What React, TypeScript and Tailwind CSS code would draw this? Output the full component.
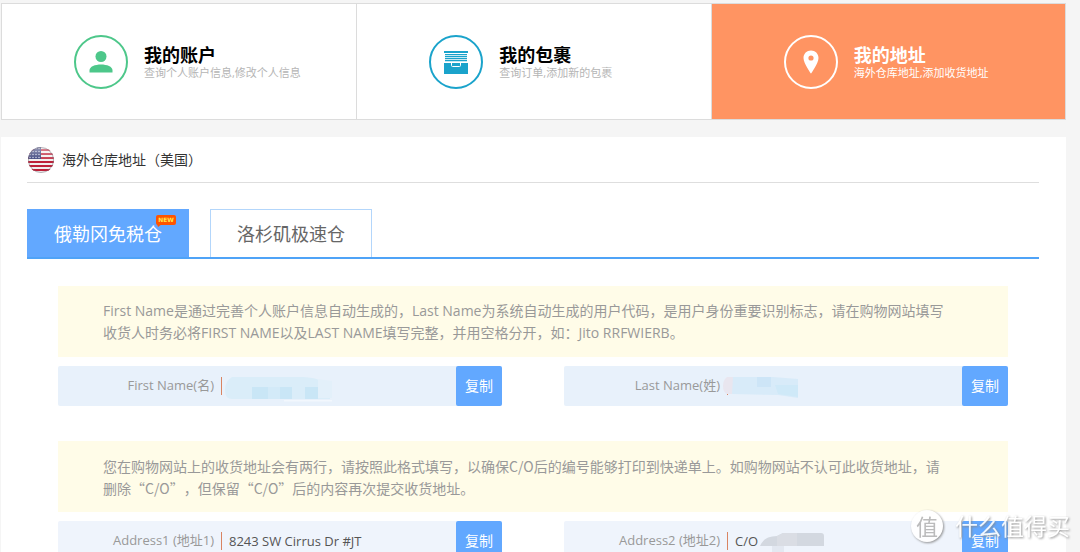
import { ReactNode, useState } from "react";

function AccountIcon() {
  return (
    <svg viewBox="0 0 24 24" className="size-6" fill="currentColor" aria-hidden="true">
      <circle cx="12" cy="6.5" r="5.5" />
      <path d="M0.5 22.5v-2c0-4 5.500-6 11.500-6s11.500 2 11.500 6v2z" />
    </svg>
  );
}

function ParcelIcon() {
  return (
    <svg viewBox="0 0 24 24" className="size-6" fill="currentColor" aria-hidden="true">
      <path d="M0 1h24v2H0zM1 4h22v1.200H1zM1 6h22v1.200H1zM1 8h22v1.200H1zM1 10h22v1.200H1z" />
      <path d="M0 13h24v11H0z" />
      <path d="M7.500 13v2.500q0 1 1 1h7q1 0 1-1V13" fill="none" stroke="white" strokeWidth="1" />
    </svg>
  );
}

function PinIcon() {
  return (
    <svg viewBox="0 0 24 24" className="size-6" fill="currentColor" aria-hidden="true">
      <path
        fillRule="evenodd"
        d="M12 0.500c-4.200 0-7.500 3.200-7.500 7.400 0 5.200 7.500 15.600 7.500 15.600s7.500-10.400 7.500-15.600c0-4.200-3.300-7.400-7.500-7.400zm0 4.900a2.600 2.600 0 1 1 0 5.200 2.600 2.600 0 0 1 0-5.200z"
      />
    </svg>
  );
}

function FlagIcon() {
  return (
    <svg viewBox="0 0 26 26" className="size-[26px]" aria-hidden="true">
      <defs>
        <clipPath id="flag-disc">
          <circle cx="13" cy="13" r="13" />
        </clipPath>
        <linearGradient id="flag-gloss" x1="0" y1="0" x2="0" y2="1">
          <stop offset="0" stopColor="white" stopOpacity="0.500" />
          <stop offset="0.500" stopColor="white" stopOpacity="0.100" />
          <stop offset="0.510" stopColor="white" stopOpacity="0" />
        </linearGradient>
      </defs>
      <g clipPath="url(#flag-disc)">
        <rect width="26" height="26" fill="#f1eeee" />
        {[3, 7, 11, 15, 19, 23].map((y) => (
          <rect key={y} y={y - 1} width="26" height="2" fill="#bd2038" />
        ))}
        <rect width="13" height="12" fill="#2c3472" />
        {[2, 5, 8, 11].map((y) =>
          [2, 5, 8, 11].map((x) => <circle key={`${x}-${y}`} cx={x} cy={y - 0.5} r="0.700" fill="#d9dcee" />),
        )}
        <rect width="26" height="26" fill="url(#flag-gloss)" />
      </g>
      <circle cx="13" cy="13" r="12.500" fill="none" stroke="#77707c" strokeOpacity="0.500" />
    </svg>
  );
}

function NewBadge() {
  return (
    <span className="absolute top-[5px] right-3 flex h-[10px] w-5 items-center justify-center rounded-xs bg-[#ff5400] font-['DejaVu_Sans'] text-[6px] leading-none font-bold text-[#ffe94a]">
      NEW
      <svg viewBox="0 0 5 3" className="absolute top-[9px] left-px h-[3px] w-[5px]" aria-hidden="true">
        <path d="M0 0h5L1 3z" fill="#ff5400" />
      </svg>
    </span>
  );
}

const cards = [
  { title: "我的账户", text: "查询个人账户信息,修改个人信息", icon: <AccountIcon />, active: false, ring: "border-[#4dc78a] text-[#4dc78a]" },
  { title: "我的包裹", text: "查询订单,添加新的包裹", icon: <ParcelIcon />, active: false, ring: "border-[#1aa3cb] text-[#1aa3cb]" },
  { title: "我的地址", text: "海外仓库地址,添加收货地址", icon: <PinIcon />, active: true, ring: "border-white text-white" },
];

function Note({ font = "", children }: { font?: string; children: ReactNode }) {
  return (
    <p className={`bg-[#fffce8] pt-[14px] pr-[60px] pb-[13px] pl-[45px] text-sm leading-[22px] text-[#999] ${font}`}>
      {children}
    </p>
  );
}

type FieldProps = { id: string; label: string; value?: string; tone: string; mask?: ReactNode };

function Field({ id, label, value = "", tone, mask }: FieldProps) {
  return (
    <div className={`relative flex h-10 items-center rounded-xs ${tone}`}>
      <label htmlFor={id} className="w-[156px] shrink-0 text-right text-[13px] text-[#999]">
        {label}
      </label>
      <span className="ml-[7px] h-[18px] w-px bg-[#d98462]" />
      <input
        id={id}
        readOnly
        value={value}
        className="h-full min-w-0 flex-1 bg-transparent pl-[7px] text-[13px] text-[#555] outline-none"
      />
      {mask}
      <button type="button" className="h-full w-[46px] shrink-0 rounded-xs bg-[#62a8ff] text-sm text-white">
        复制
      </button>
    </div>
  );
}

function FirstNameMask() {
  return (
    <svg viewBox="0 0 112 26" className="absolute top-[10px] left-[166px] h-[26px] w-28" aria-hidden="true">
      <path d="M8 1H80q14 1 16 4l10 2v16H8q-7 0-7-9t7-13z" fill="#daedf9" />
      <path d="M94 3l14 2v17H94z" fill="#e3f0fa" />
      <path d="M28 11h40v12H28zM81 11h13v12H81z" fill="#c9e6f6" />
      <path d="M44 11h12v12H44z" fill="#d3eaf8" />
      <path d="M60 24h48v1.500H60z" fill="#f2f7fd" />
    </svg>
  );
}

function LastNameMask() {
  return (
    <svg viewBox="0 0 76 24" className="absolute top-[9px] left-[159px] h-6 w-[76px]" aria-hidden="true">
      <path d="M4 2h8v17H4Q0 17 0 11t4-9z" fill="#e9e6ef" />
      <path d="M10 2H50l25 2v19l-20-3-46-1z" fill="#d8ebf9" />
      <path d="M34 2h14v10H34z" fill="#cde5f7" />
      <path d="M52 10h23v12l-20-3z" fill="#cfe9f8" />
    </svg>
  );
}

function CareOfMask() {
  return (
    <svg viewBox="0 0 66 24" className="absolute top-[11px] left-[195px] h-6 w-[66px]" aria-hidden="true">
      <path d="M1 14Q5 4 18 4l6-3h38q3 0 3 3v10z" fill="#d3d8e0" />
      <path d="M18 4l6-3h14v13H18z" fill="#dadde4" />
      <path d="M13 14h12v9H13z" fill="#e3e8f1" />
    </svg>
  );
}

function Watermark() {
  return (
    <div className="pointer-events-none fixed right-[10px] bottom-[10px] flex items-center gap-3 text-white opacity-90 drop-shadow-[1px_1px_1px_#888]">
      <span className="flex size-8 items-center justify-center rounded-full bg-white text-[22px] leading-none text-[#b5b5b5]">
        值
      </span>
      <span className="text-[23px] leading-8">什么值得买</span>
    </div>
  );
}

export default function App() {
  const [tab, setTab] = useState(0);
  const tabs = ["俄勒冈免税仓", "洛杉矶极速仓"];

  return (
    <div className="min-h-screen bg-[#f5f5f5] pt-[3px] pr-[14px] pl-px font-['Open_Sans','Noto_Sans_CJK_SC',sans-serif] [text-spacing-trim:space-all]">
      <nav className="grid grid-cols-3 border border-[#dcdcdc] bg-white">
        {cards.map((card) => (
          <a
            key={card.title}
            href="#"
            className={`flex h-[115px] items-center gap-4 border-l border-[#dcdcdc] pl-[72px] first:border-l-0 ${
              card.active ? "bg-[#ff9462] text-white" : "text-black"
            }`}
          >
            <span className={`flex size-[54px] shrink-0 items-center justify-center rounded-full border-2 ${card.ring}`}>
              {card.icon}
            </span>
            <span className="flex flex-col pt-[2px]">
              <span className="text-lg leading-5 font-bold">{card.title}</span>
              <span className={`text-[11px] leading-4 ${card.active ? "text-white" : "text-[#b5b5b5]"}`}>{card.text}</span>
            </span>
          </a>
        ))}
      </nav>

      <main className="mt-[17px] bg-white pr-[27px] pb-9 pl-[26px]">
        <h1 className="flex h-[46px] items-center gap-2 border-b border-[#dedede] pl-px text-sm text-[#333]">
          <FlagIcon />
          海外仓库地址（美国）
        </h1>

        <div role="tablist" className="mt-[26px] flex gap-[21px] border-b-2 border-[#4fa3f7]">
          {tabs.map((name, i) => (
            <button
              key={name}
              type="button"
              role="tab"
              aria-selected={tab === i}
              onClick={() => setTab(i)}
              className={`relative h-12 w-[162px] border border-b-0 text-lg ${
                tab === i ? "border-[#62a8ff] bg-[#62a8ff] text-white" : "border-[#b3d6fb] bg-white text-[#666]"
              }`}
            >
              {name}
              {i === 0 && <NewBadge />}
            </button>
          ))}
        </div>

        <div className="mx-[31px] mt-[27px] flex flex-col gap-[35px]">
          <section className="flex flex-col gap-[9px]">
            <Note>
              First Name是通过完善个人账户信息自动生成的，Last Name为系统自动生成的用户代码，是用户身份重要识别标志，请在购物网站填写收货人时务必将FIRST
              NAME以及LAST NAME填写完整，并用空格分开，如：Jito RRFWIERB。
            </Note>
            <div className="grid grid-cols-2 gap-[62px]">
              <Field id="first-name" label="First Name(名)" tone="bg-[#e8f1fb]" mask={<FirstNameMask />} />
              <Field id="last-name" label="Last Name(姓)" tone="bg-[#e8f1fb]" mask={<LastNameMask />} />
            </div>
          </section>

          <section className="flex flex-col gap-[9px]">
            <Note font="font-['Noto_Sans_CJK_SC',sans-serif]">
              您在购物网站上的收货地址会有两行，请按照此格式填写，以确保C/O后的编号能够打印到快递单上。如购物网站不认可此收货地址，请删除“C/O”，但保留“C/O”后的内容再次提交收货地址。
            </Note>
            <div className="grid grid-cols-2 gap-[62px]">
              <Field id="address-1" label="Address1 (地址1)" value="8243 SW Cirrus Dr #JT" tone="bg-[#eff4fc]" />
              <Field id="address-2" label="Address2 (地址2)" value="C/O" tone="bg-[#eff4fc]" mask={<CareOfMask />} />
            </div>
          </section>
        </div>
      </main>
      <Watermark />
    </div>
  );
}
